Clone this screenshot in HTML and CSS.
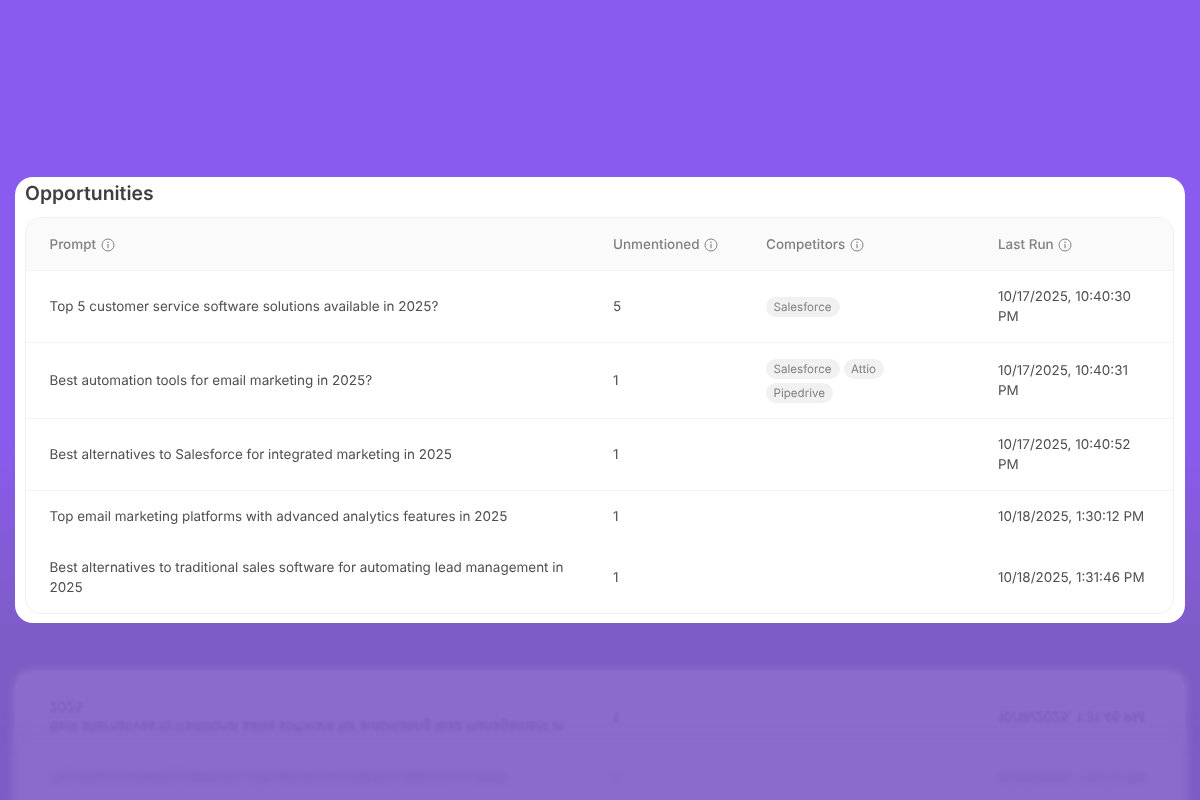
FILE: index.html
```html
<!DOCTYPE html>
<html lang="en">
<head>
<meta charset="utf-8">
<title>Opportunities</title>
<link rel="stylesheet" href="styles.css">
</head>
<body>
<svg class="sprite" width="0" height="0" aria-hidden="true">
  <symbol id="info" viewBox="0 0 14 14">
    <circle cx="7" cy="7" r="6" fill="none" stroke="currentColor" stroke-width="1"/>
    <path d="M7 6.4v3.4" fill="none" stroke="currentColor" stroke-width="1.1" stroke-linecap="round"/>
    <circle cx="7" cy="4.3" r=".75" fill="currentColor"/>
  </symbol>
</svg>
<main class="stage">
  <section class="card main-card">
    <h2 class="title">Opportunities</h2>
    <div class="table-wrap">
      <table class="table">
        <colgroup><col class="c-prompt"><col class="c-count"><col class="c-comp"><col class="c-run"></colgroup>
        <thead>
          <tr>
            <th><span class="th">Prompt <svg class="info"><use href="#info"/></svg></span></th>
            <th><span class="th">Unmentioned <svg class="info"><use href="#info"/></svg></span></th>
            <th><span class="th">Competitors <svg class="info"><use href="#info"/></svg></span></th>
            <th><span class="th">Last Run <svg class="info"><use href="#info"/></svg></span></th>
          </tr>
        </thead>
        <tbody>
          <tr>
            <td>Top 5 customer service software solutions available in 2025?</td>
            <td>5</td>
            <td><div class="chips"><span class="chip">Salesforce</span></div></td>
            <td>10/17/2025, 10:40:30 PM</td>
          </tr>
          <tr>
            <td>Best automation tools for email marketing in 2025?</td>
            <td>1</td>
            <td><div class="chips"><span class="chip">Salesforce</span><span class="chip">Attio</span><span class="chip">Pipedrive</span></div></td>
            <td>10/17/2025, 10:40:31 PM</td>
          </tr>
          <tr>
            <td>Best alternatives to Salesforce for integrated marketing in 2025</td>
            <td>1</td>
            <td></td>
            <td>10/17/2025, 10:40:52 PM</td>
          </tr>
          <tr>
            <td>Top email marketing platforms with advanced analytics features in 2025</td>
            <td>1</td>
            <td></td>
            <td>10/18/2025, 1:30:12 PM</td>
          </tr>
          <tr>
            <td>Best alternatives to traditional sales software for automating lead management in 2025</td>
            <td>1</td>
            <td></td>
            <td>10/18/2025, 1:31:46 PM</td>
          </tr>
        </tbody>
      </table>
    </div>
  </section>
  <div class="mirror" aria-hidden="true">
    <section class="card reflection">
      <div class="title">Opportunities</div>
      <div class="table-wrap">
        <table class="table">
          <colgroup><col class="c-prompt"><col class="c-count"><col class="c-comp"><col class="c-run"></colgroup>
          <thead>
            <tr>
              <th><span class="th">Prompt <svg class="info"><use href="#info"/></svg></span></th>
              <th><span class="th">Unmentioned <svg class="info"><use href="#info"/></svg></span></th>
              <th><span class="th">Competitors <svg class="info"><use href="#info"/></svg></span></th>
              <th><span class="th">Last Run <svg class="info"><use href="#info"/></svg></span></th>
            </tr>
          </thead>
          <tbody>
            <tr>
              <td>Top 5 customer service software solutions available in 2025?</td>
              <td>5</td>
              <td><div class="chips"><span class="chip">Salesforce</span></div></td>
              <td>10/17/2025, 10:40:30 PM</td>
            </tr>
            <tr>
              <td>Best automation tools for email marketing in 2025?</td>
              <td>1</td>
              <td><div class="chips"><span class="chip">Salesforce</span><span class="chip">Attio</span><span class="chip">Pipedrive</span></div></td>
              <td>10/17/2025, 10:40:31 PM</td>
            </tr>
            <tr>
              <td>Best alternatives to Salesforce for integrated marketing in 2025</td>
              <td>1</td>
              <td></td>
              <td>10/17/2025, 10:40:52 PM</td>
            </tr>
            <tr>
              <td>Top email marketing platforms with advanced analytics features in 2025</td>
              <td>1</td>
              <td></td>
              <td>10/18/2025, 1:30:12 PM</td>
            </tr>
            <tr>
              <td>Best alternatives to traditional sales software for automating lead management in 2025</td>
              <td>1</td>
              <td></td>
              <td>10/18/2025, 1:31:46 PM</td>
            </tr>
          </tbody>
        </table>
      </div>
    </section>
    <div class="haze haze-soft"></div>
    <div class="haze haze-strong"></div>
  </div>
</main>
</body>
</html>
```

FILE: styles.css
```css
* { box-sizing: border-box; }

html, body {
  margin: 0;
  height: 800px;
  overflow: hidden;
}

body {
  font-family: Inter, "Liberation Sans", sans-serif;
  text-rendering: geometricPrecision;
  background: linear-gradient(180deg, #8a5bef 0, #8a5bef 430px, #7d5cc5 640px, #7d5cc5 800px);
}

.sprite { display: block; }

.stage {
  display: flex;
  flex-direction: column;
  gap: 47.5px;
  padding: 177px 15px 0;
}

.card {
  flex: none;
  background: #fff;
  border-radius: 18px;
  padding: 0 11px 9.5px 10px;
}

.main-card { filter: blur(0.3px); }

.title {
  margin: 0;
  height: 40px;
  padding-top: 3px;
  font-size: 19.4px;
  line-height: 26px;
  font-weight: 600;
  color: #3f3f3f;
}

.table-wrap {
  border: 1px solid #efefef;
  border-radius: 16px;
  overflow: hidden;
}

.table {
  width: 100%;
  table-layout: fixed;
  border-collapse: collapse;
  font-size: 13.47px;
  line-height: 20px;
  color: #4f4f4f;
}

.c-prompt { width: 563px; }
.c-count { width: 153px; }
.c-comp { width: 232px; }

th {
  height: 52px;
  padding: 2px 24px 0;
  text-align: left;
  font-weight: 500;
  color: #808080;
  background: #fafafa;
}

th:first-child,
td:first-child { padding-left: 23.5px; }

.th {
  display: inline-flex;
  align-items: center;
  gap: 4.5px;
  white-space: nowrap;
}

.info {
  width: 14px;
  height: 14px;
}

td {
  padding: 16.5px 24px 14.5px;
  vertical-align: middle;
  border-top: 1px solid #f3f3f3;
}

tbody tr:last-child td { border-top: 0; }

.chips {
  display: flex;
  flex-wrap: wrap;
  gap: 4px;
}

.chip {
  height: 20px;
  padding: 0 8px 0 7.5px;
  border-radius: 10px;
  background: #f1f1f1;
  color: #808080;
  font-size: 11.6px;
  line-height: 20px;
  font-weight: 400;
}

.mirror {
  position: relative;
  flex: none;
}

.reflection {
  transform: scaleY(-1);
  opacity: 0.1;
  filter: blur(1.2px);
  box-shadow: 0 0 8px 2px #fff;
}

.haze {
  position: absolute;
  inset: -10px -15px 0;
}

.haze-soft {
  backdrop-filter: blur(1.5px);
  -webkit-mask-image: linear-gradient(180deg, transparent 50px, #000 75px);
  mask-image: linear-gradient(180deg, transparent 50px, #000 75px);
}

.haze-strong {
  backdrop-filter: blur(3px);
  -webkit-mask-image: linear-gradient(180deg, transparent 65px, #000 95px);
  mask-image: linear-gradient(180deg, transparent 65px, #000 95px);
}
```
